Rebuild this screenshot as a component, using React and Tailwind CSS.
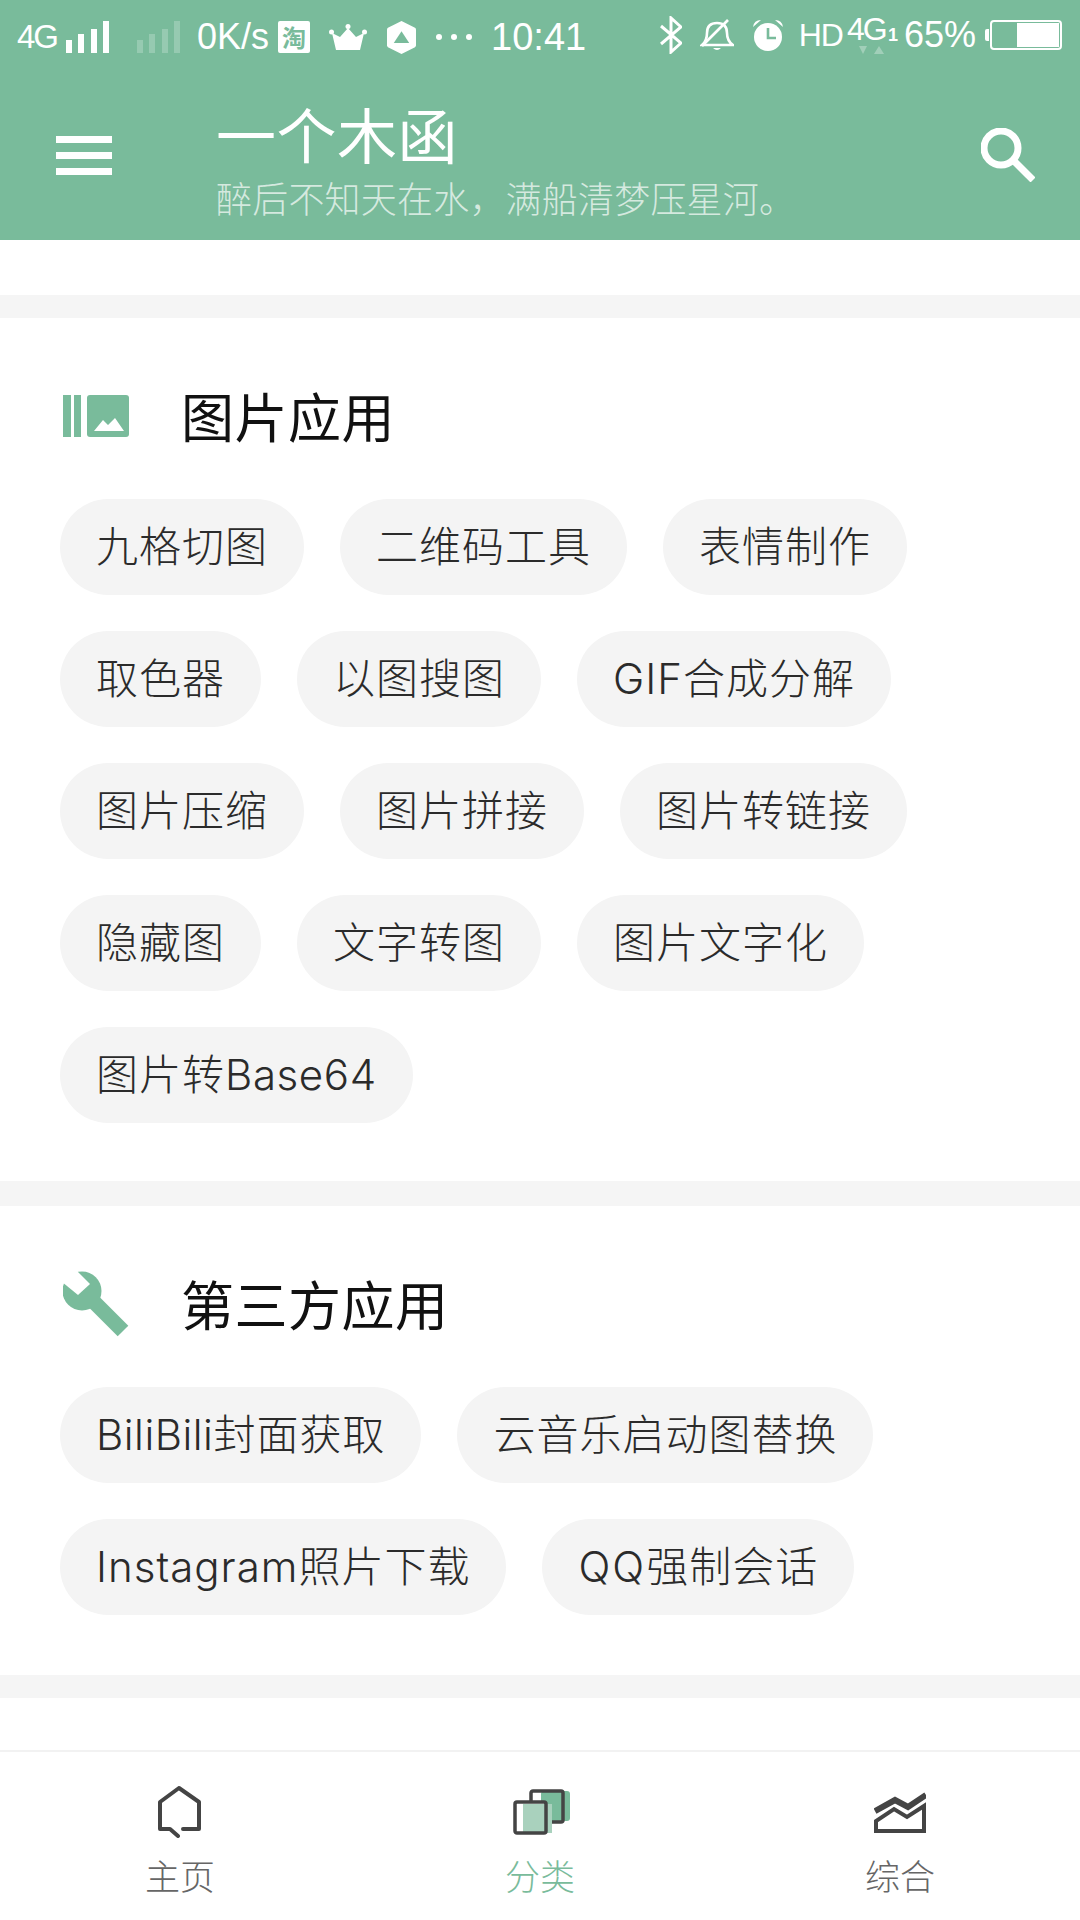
const FONT = "font-['Roboto','Noto_Sans_CJK_SC',sans-serif]";

function Signal({ faint }) {
  const o = faint ? 0.22 : 1;
  return (
    <svg width="43" height="32" viewBox="0 0 43 32" fill="#fff" opacity={o}>
      <rect x="0" y="19" width="6" height="13" />
      <rect x="12" y="13" width="6" height="19" />
      <rect x="25" y="8" width="6" height="24" />
      <rect x="37" y="0" width="6" height="32" />
    </svg>
  );
}

function Crown() {
  return (
    <svg width="38" height="26" viewBox="0 0 38 26" fill="#fff">
      <circle cx="19" cy="2.5" r="2.5" />
      <circle cx="2.5" cy="8" r="2.5" />
      <circle cx="35.5" cy="8" r="2.5" />
      <path d="M3 9 L11 13 L19 4 L27 13 L35 9 L31 26 L7 26 Z" />
    </svg>
  );
}

function Hex() {
  return (
    <svg width="29" height="33" viewBox="0 0 30 39" preserveAspectRatio="none">
      <path d="M15 0 L29 8 Q30 9 30 10 L30 29 Q30 30 29 31 L15 39 L1 31 Q0 30 0 29 L0 10 Q0 9 1 8 Z" fill="#fff" />
      <path d="M15 12 L23 26 L7 26 Z" fill="#79bb9b" />
    </svg>
  );
}

function Bluetooth() {
  return (
    <svg width="22" height="38" viewBox="0 0 22 38" fill="none" stroke="#fff" strokeWidth="3">
      <path d="M1 10 L21 27 L11 36 L11 2 L21 11 L1 28" />
    </svg>
  );
}

function BellOff() {
  return (
    <svg width="34" height="33" viewBox="0 0 34 33" fill="none" stroke="#fff" strokeWidth="2.6">
      <path d="M2 26 Q7 22 7 14 Q7 4 17 4 Q27 4 27 14 Q27 22 33 26 Z" />
      <path d="M28 1 L2 27" />
      <path d="M13 29 Q17 33 21 29 Z" fill="#fff" stroke="none" />
    </svg>
  );
}

function Alarm() {
  return (
    <svg width="34" height="32" viewBox="0 0 34 32">
      <circle cx="17" cy="18" r="14" fill="#fff" />
      <path d="M2 8 Q3 1 10 1 Z M32 8 Q31 1 24 1 Z" fill="#fff" />
      <path d="M17 9 L17 19 L25 19" fill="none" stroke="#79bb9b" strokeWidth="2.6" />
    </svg>
  );
}

function Battery() {
  return (
    <div className="flex items-center">
      <div className="w-[4px] h-[12px] bg-white rounded-l-[2px]" />
      <div className="ml-[1px] w-[72px] h-[30px] border-2 border-white rounded-[4px] flex justify-end p-[1px]">
        <div className="w-[42px] h-full bg-white" />
      </div>
    </div>
  );
}

function StatusBar() {
  return (
    <div className={`h-[80px] flex items-start justify-between pl-[17px] pr-[18px] text-white ${FONT}`}>
      <div className="h-[74px] flex items-center">
        <span className="text-[33px] tracking-[-2px] font-['Liberation_Sans']">4G</span>
        <div className="ml-[9px]"><Signal /></div>
        <div className="ml-[28px]"><Signal faint /></div>
        <span className="ml-[17px] text-[36px] font-light font-['Liberation_Sans']">0K/s</span>
        <span className="ml-[9px] w-[32px] h-[32px] bg-white rounded-[2px] text-[#79bb9b] text-[24px] leading-[32px] text-center font-['Noto_Sans_CJK_SC'] font-bold">淘</span>
        <div className="ml-[19px]"><Crown /></div>
        <div className="ml-[20px]"><Hex /></div>
        <div className="ml-[20px] flex gap-[9px]">
          <span className="w-[6px] h-[6px] rounded-full bg-white" />
          <span className="w-[6px] h-[6px] rounded-full bg-white" />
          <span className="w-[6px] h-[6px] rounded-full bg-white" />
        </div>
        <span className="ml-[19px] text-[38px] font-light font-['Liberation_Sans']">10:41</span>
      </div>
      <div className="h-[70px] flex items-center">
        <Bluetooth />
        <div className="ml-[18px]"><BellOff /></div>
        <div className="ml-[17px]"><Alarm /></div>
        <span className="ml-[14px] text-[32px] tracking-[-1px] font-['Liberation_Sans']">HD</span>
        <div className="relative ml-[4px] w-[38px] h-[70px] flex items-start pt-[13px]">
          <span className="text-[32px] leading-[32px] tracking-[-2px] font-['Liberation_Sans']">4G</span>
          <svg className="absolute left-[12px] top-[46px] opacity-30" width="26" height="8" viewBox="0 0 26 8" fill="#fff">
            <path d="M0 0 H8 L4 8 Z M15 8 H25 L20 0 Z" />
          </svg>
        </div>
        <span className="ml-[3px] text-[18px] font-bold font-['Liberation_Sans']">1</span>
        <span className="ml-[6px] text-[36px] font-['Liberation_Sans']">65%</span>
        <div className="ml-[9px]"><Battery /></div>
      </div>
    </div>
  );
}

function Header() {
  return (
    <header className="h-[240px] bg-[#79bb9b] shrink-0">
      <StatusBar />
      <div className="h-[160px] flex items-start pl-[56px] pr-[45px] text-white">
        <div className="mt-[56px] w-[56px] flex flex-col gap-[9px]">
          <div className="h-[7px] bg-white" />
          <div className="h-[7px] bg-white" />
          <div className="h-[7px] bg-white" />
        </div>
        <div className="ml-[104px] flex-1 font-['Noto_Sans_CJK_SC',sans-serif] mt-[13px]">
          <div className="text-[60px] leading-[80px] tracking-[0.5px] font-normal">一个木函</div>
          <div className="text-[36px] leading-[48px] tracking-[0.2px] text-white/70 font-light">醉后不知天在水，满船清梦压星河。</div>
        </div>
        <svg className="mt-[48px]" width="54" height="54" viewBox="0 0 54 54" fill="none" stroke="#fff" strokeWidth="7">
          <circle cx="20" cy="20" r="17" />
          <path d="M32 32 L52 52" />
        </svg>
      </div>
    </header>
  );
}

function Pill({ children }) {
  return (
    <div className="h-[96px] px-[36px] rounded-full bg-[#f4f4f4] text-[#2b2b2b] text-[42px] leading-[96px] tracking-[1px] font-light font-['Inter','Noto_Sans_CJK_SC',sans-serif]">
      {children}
    </div>
  );
}

function PictureIcon() {
  return (
    <svg width="66" height="42" viewBox="0 0 66 42">
      <rect x="0" y="0" width="8" height="42" fill="#79bb9b" />
      <rect x="11" y="0" width="7" height="42" fill="#79bb9b" />
      <rect x="24" y="0" width="42" height="42" rx="3" fill="#79bb9b" />
      <path d="M31 36 L40 25 L45 30 L52 23 L61 36 Z" fill="#fff" />
    </svg>
  );
}

function WrenchIcon() {
  return (
    <svg width="66" height="66" viewBox="0 0 66 66">
      <circle cx="19" cy="20" r="19.5" fill="#79bb9b" />
      <path d="M20 20 L60 60" stroke="#79bb9b" strokeWidth="15" fill="none" />
      <path d="M12 -2 L27 13 L15 24 L-2 10 Z" fill="#fff" />
    </svg>
  );
}

function Band({ tall }) {
  return <div className={tall ? "h-[25px] bg-[#f5f5f5]" : "h-[23px] bg-[#f5f5f5]"} />;
}

function Section({ icon, title, children, bottom }) {
  return (
    <section className={`px-[60px] ${bottom}`}>
      <div className="h-[181px] pt-[24px] flex items-center">
        <div className="w-[121px] pl-[3px] pb-[10px] flex items-center">{icon}</div>
        <h2 className="text-[53px] tracking-[0.5px] font-normal text-[#111]">{title}</h2>
      </div>
      <div className="flex flex-wrap gap-[36px]">{children}</div>
    </section>
  );
}

function NavItem({ icon, label, active }) {
  return (
    <div className="flex-1 flex flex-col items-center">
      <div className="h-[86px] flex items-end">{icon}</div>
      <div className={`mt-[19px] text-[35px] leading-[44px] font-light ${active ? "text-[#79bb9b]" : "text-[#666]"}`}>{label}</div>
    </div>
  );
}

function BottomNav() {
  return (
    <nav className="h-[170px] shrink-0 bg-white border-t-2 border-[#f2f2f2] flex">
      <NavItem label="主页" icon={
        <svg width="44" height="52" viewBox="0 0 44 52" fill="none" stroke="#444" strokeWidth="4" strokeLinejoin="round" strokeLinecap="round">
          <path d="M25 43 L41 43 L41 16 L21 2 L2 16 L2 43 L12 43 L20 50" />
        </svg>
      } />
      <NavItem active label="分类" icon={
        <svg className="mb-[3px] ml-[3px]" width="57" height="46" viewBox="0 0 57 46">
          <rect x="28" y="2" width="29" height="30" rx="3" fill="#79bb9b" />
          <rect x="18" y="2" width="32" height="31" rx="2" fill="none" stroke="#444" strokeWidth="3.5" />
          <rect x="2" y="13" width="31" height="31" rx="2" fill="#fff" />
          <rect x="10" y="15" width="29" height="29" fill="#a9d1bd" />
          <rect x="2" y="13" width="31" height="31" rx="2" fill="none" stroke="#444" strokeWidth="3.5" />
        </svg>
      } />
      <NavItem label="综合" icon={
        <svg className="mb-[5px]" width="52" height="41" viewBox="0 0 52 41" fill="none" stroke="#444">
          <path d="M1 19 L21 8 L34 15 L52 3" strokeWidth="6" />
          <path d="M2 39 L2 29 L20 17 L33 25 L50 14 L50 39 Z" strokeWidth="4" />
        </svg>
      } />
    </nav>
  );
}

export default function App() {
  const picture = ["九格切图", "二维码工具", "表情制作", "取色器", "以图搜图", "GIF合成分解", "图片压缩", "图片拼接", "图片转链接", "隐藏图", "文字转图", "图片文字化"];
  return (
    <div className="w-[1080px] h-[1920px] overflow-hidden flex flex-col bg-white font-['Roboto','Noto_Sans_CJK_SC',sans-serif]">
      <Header />
      <main className="flex-1 overflow-hidden">
        <div className="h-[55px]" />
        <Band />
        <Section bottom="pb-[58px]" icon={<PictureIcon />} title="图片应用">
          {picture.map((t) => <Pill key={t}>{t}</Pill>)}
          <Pill>图片转<span className="tracking-[0.6px]">Base64</span></Pill>
        </Section>
        <Band tall />
        <Section bottom="pb-[60px]" icon={<WrenchIcon />} title="第三方应用">
          <Pill><span className="tracking-[0.5px]">BiliBili</span>封面获取</Pill>
          <Pill>云音乐启动图替换</Pill>
          <Pill>Instagram照片下载</Pill>
          <Pill><span className="tracking-[2px]">QQ</span>强制会话</Pill>
        </Section>
        <Band />
      </main>
      <BottomNav />
    </div>
  );
}
